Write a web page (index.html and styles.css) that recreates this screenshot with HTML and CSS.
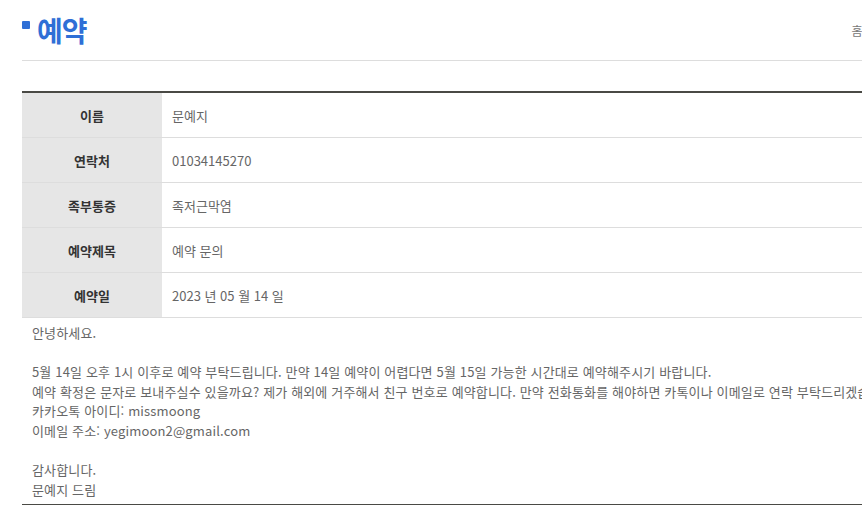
FILE: index.html
```html
<!DOCTYPE html>
<html lang="ko">
  <head>
    <meta charset="UTF-8" />
    <meta name="viewport" content="width=device-width, initial-scale=1.0" />
    <title>예약</title>
    <link rel="stylesheet" href="styles.css">
  </head>
  <body>
    <div class="container">
      <!-- Page title -->
      <div class="page-head">
        <h2 class="page-title"><span class="bullet"></span>예약</h2>
        <div class="breadcrumb">홈 &gt; 예약</div>
      </div>

      <!-- Reservation detail -->
      <table class="view-table">
        <tr>
          <th>이름</th>
          <td>문예지</td>
        </tr>
        <tr>
          <th>연락처</th>
          <td>01034145270</td>
        </tr>
        <tr>
          <th>족부통증</th>
          <td>족저근막염</td>
        </tr>
        <tr>
          <th>예약제목</th>
          <td>예약 문의</td>
        </tr>
        <tr>
          <th>예약일</th>
          <td>2023 년 05 월 14 일</td>
        </tr>
      </table>

      <div class="view-content">
        <p>안녕하세요.</p>
        <p>&nbsp;</p>
        <p>5월 14일 오후 1시 이후로 예약 부탁드립니다. 만약 14일 예약이 어렵다면 5월 15일 가능한 시간대로 예약해주시기 바랍니다.</p>
        <p>예약 확정은 문자로 보내주실수 있을까요? 제가 해외에 거주해서 친구 번호로 예약합니다. 만약 전화통화를 해야하면 카톡이나 이메일로 연락 부탁드리겠습니다.</p>
        <p>카카오톡 아이디: missmoong</p>
        <p>이메일 주소: yegimoon2@gmail.com</p>
        <p>&nbsp;</p>
        <p>감사합니다.</p>
        <p>문예지 드림</p>
      </div>
    </div>
  </body>
</html>
```

FILE: styles.css
```css
html,
body {
  overflow: hidden;
}
body {
  margin: 0;
  font-family: "Noto Sans CJK KR", "Noto Sans", sans-serif;
  color: #666;
  background: #fff;
}
.container {
  width: 876px;
  margin-left: 22px;
}
.page-head {
  display: flex;
  justify-content: space-between;
  align-items: center;
  height: 60px;
  border-bottom: 1px solid #ddd;
}
.page-title {
  display: flex;
  align-items: center;
  margin: 0;
  font-size: 28px;
  font-weight: bold;
  color: #2f6fd6;
  letter-spacing: -1px;
}
.bullet {
  width: 8px;
  height: 8px;
  border-radius: 1px;
  background: #2f6fd6;
  margin-right: 7px;
  margin-top: -11px;
}
.breadcrumb {
  font-size: 12px;
  color: #777;
}
.view-table {
  width: 100%;
  margin-top: 30px;
  border-collapse: collapse;
  border-top: 2px solid #4a4a45;
  font-size: 13px;
}
.view-table th,
.view-table td {
  height: 44px;
  padding: 0;
  border-bottom: 1px solid #ddd;
}
.view-table th {
  width: 140px;
  background: #e6e6e6;
  color: #333;
  font-weight: bold;
}
.view-table td {
  padding-left: 10px;
  color: #666;
}
.view-content {
  padding: 5px 10px 5px;
  border-bottom: 1px solid #4a4a45;
  font-size: 13px;
  line-height: 19.6px;
  letter-spacing: 0.15px;
  white-space: nowrap;
}
.view-content p {
  margin: 0;
}
```
